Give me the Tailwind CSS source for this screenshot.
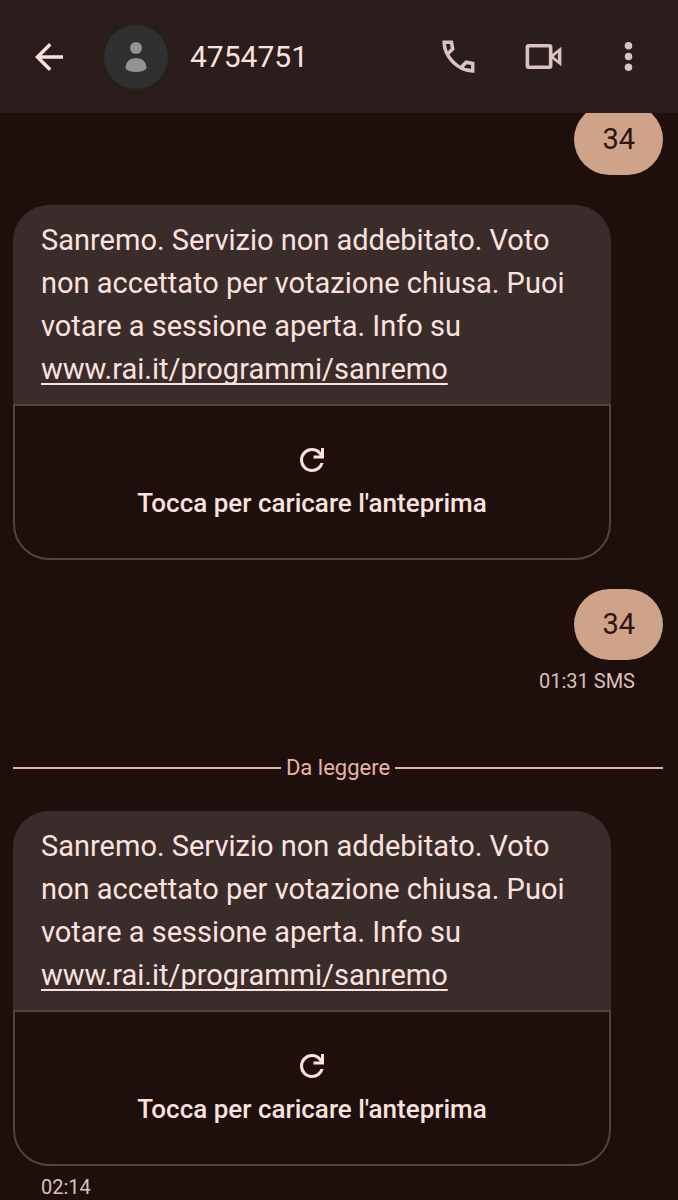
<!DOCTYPE html>
<html lang="it">
<head>
<meta charset="utf-8">
<meta name="viewport" content="width=device-width, initial-scale=1">
<title>4754751</title>
<script src="https://cdn.jsdelivr.net/npm/@tailwindcss/browser@4"></script>
</head>
<body class="flex h-screen flex-col overflow-hidden bg-[#1e0f0c] font-['Roboto','Liberation_Sans',sans-serif] text-[#fbe2de]">
  <header class="flex h-[113px] shrink-0 items-center bg-[#2a1d1c] pr-7 pl-7">
    <button type="button" aria-label="Indietro">
      <svg class="size-[42px]" viewBox="0 0 24 24" fill="currentColor"><path d="m7.825 13 5.6 5.6L12 20l-8-8 8-8 1.425 1.4-5.6 5.6H20v2z"/></svg>
    </button>
    <svg class="ml-[34px] size-16" viewBox="0 0 64 64" aria-hidden="true"><circle cx="32" cy="32" r="32" fill="#303030"/><circle cx="32" cy="23" r="6" fill="#929494"/><path fill="#929494" d="M21.500 43.500C21.500 37 26 33 32 33s10.500 4 10.500 10.500C40.500 46 36 47 32 47s-8.500-1-10.500-3.500z"/></svg>
    <h1 class="ml-[22px] flex-1 text-[30px] leading-10">4754751</h1>
    <div class="flex items-center gap-[42px] text-[#dcc2bf]">
      <button type="button" aria-label="Chiama">
        <svg class="size-[43px]" viewBox="0 0 24 24" fill="currentColor"><path d="M19.95 21q-3.125 0-6.175-1.362-3.05-1.363-5.55-3.863-2.5-2.5-3.863-5.55Q3 7.175 3 4.05V3h5.9l.925 5.025-2.85 2.875q.55.975 1.225 1.85.675.875 1.45 1.625.725.725 1.588 1.388.862.662 1.862 1.237l2.9-2.9 4.9 1V21zM6.025 9l1.650-1.650L7.250 5H5.025q.125 1.025.35 2.025.225 1 .65 1.975zm8.950 8.950q.975.425 1.988.675 1.012.25 2.037.325v-2.200l-2.350-.475z"/></svg>
      </button>
      <button type="button" aria-label="Videochiamata">
        <svg class="size-[43px]" viewBox="0 0 24 24" fill="currentColor"><rect x="3" y="6" width="13" height="12" rx=".8" fill="none" stroke="currentColor" stroke-width="2"/><path fill-rule="evenodd" d="M16.500 10.900 22 6.500v11l-5.500-4.400zM20 9.900 17.800 12 20 14.100z"/></svg>
      </button>
      <button type="button" aria-label="Altre opzioni">
        <svg class="size-[43px]" viewBox="0 0 24 24" fill="currentColor"><circle cx="12" cy="6" r="2.100"/><circle cx="12" cy="12" r="2.100"/><circle cx="12" cy="18" r="2.100"/></svg>
      </button>
    </div>
  </header>

  <main class="min-h-0 flex-1 overflow-y-auto pr-[15px] pl-[13px]">
    <div class="-mt-[9px] flex justify-end">
      <p class="rounded-[36px] bg-[#cea38a] px-7 py-[14px] text-[29px] leading-[43px] text-[#2e1510]">34</p>
    </div>

    <article class="mt-[30px] mr-[52px]">
      <p class="rounded-t-[36px] bg-[#3b2c2c] px-7 pt-[14px] pb-[13px] text-[29px] leading-[43px]">Sanremo. Servizio non addebitato. Voto non accettato per votazione chiusa. Puoi votare a sessione aperta. Info su <a href="#" class="underline decoration-2 underline-offset-4 [text-decoration-skip-ink:none]">www.rai.it/programmi/sanremo</a></p>
      <button type="button" class="flex w-full flex-col items-center rounded-b-[36px] border-2 border-[#53433f] pt-9 pb-[34px] text-[26px] leading-[42px] font-medium">
        <svg class="size-9" viewBox="0 0 24 24" fill="currentColor" aria-hidden="true"><path d="M12 20q-3.350 0-5.675-2.325Q4 15.350 4 12q0-3.350 2.325-5.675Q8.650 4 12 4q1.725 0 3.300.713 1.575.712 2.700 2.037V4h2v7h-7V9h4.200q-.8-1.400-2.188-2.200Q13.625 6 12 6 9.500 6 7.750 7.750T6 12q0 2.500 1.750 4.250T12 18q1.925 0 3.475-1.100T17.650 14h2.100q-.7 2.650-2.850 4.325Q14.750 20 12 20z"/></svg>
        <span class="mt-1">Tocca per caricare l'anteprima</span>
      </button>
    </article>

    <div class="mt-[29px] flex flex-col items-end">
      <p class="rounded-[36px] bg-[#cea38a] px-7 py-[14px] text-[29px] leading-[43px] text-[#2e1510]">34</p>
      <time datetime="01:31" class="mt-[9px] mr-7 text-[20px] leading-6 text-[#d9c1bd]">01:31 SMS</time>
    </div>

    <div class="mt-[59px] flex items-center gap-[5px] text-[22px] leading-8 text-[#e9b3a7]">
      <span class="h-[2px] flex-1 bg-[#e9b3a7]"></span>
      <span>Da leggere</span>
      <span class="h-[2px] flex-1 bg-[#e9b3a7]"></span>
    </div>

    <article class="mt-[27px] mr-[52px]">
      <p class="rounded-t-[36px] bg-[#3b2c2c] px-7 pt-[14px] pb-[13px] text-[29px] leading-[43px]">Sanremo. Servizio non addebitato. Voto non accettato per votazione chiusa. Puoi votare a sessione aperta. Info su <a href="#" class="underline decoration-2 underline-offset-4 [text-decoration-skip-ink:none]">www.rai.it/programmi/sanremo</a></p>
      <button type="button" class="flex w-full flex-col items-center rounded-b-[36px] border-2 border-[#53433f] pt-9 pb-[34px] text-[26px] leading-[42px] font-medium">
        <svg class="size-9" viewBox="0 0 24 24" fill="currentColor" aria-hidden="true"><path d="M12 20q-3.350 0-5.675-2.325Q4 15.350 4 12q0-3.350 2.325-5.675Q8.650 4 12 4q1.725 0 3.300.713 1.575.712 2.700 2.037V4h2v7h-7V9h4.200q-.8-1.400-2.188-2.200Q13.625 6 12 6 9.500 6 7.750 7.750T6 12q0 2.500 1.750 4.250T12 18q1.925 0 3.475-1.100T17.650 14h2.100q-.7 2.650-2.850 4.325Q14.750 20 12 20z"/></svg>
        <span class="mt-1">Tocca per caricare l'anteprima</span>
      </button>
    </article>
    <time datetime="02:14" class="mt-[9px] ml-7 block text-[20px] leading-6 text-[#d9c1bd]">02:14</time>
  </main>
</body>
</html>
